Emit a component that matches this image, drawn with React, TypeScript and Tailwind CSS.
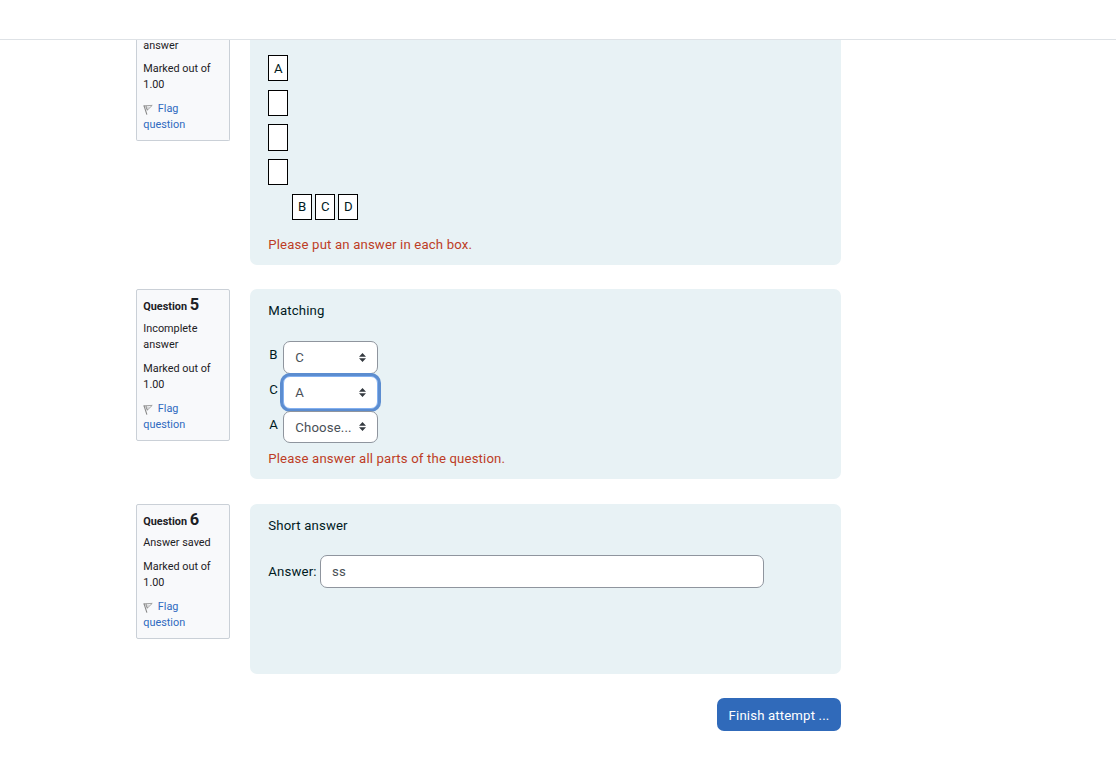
import { useState } from "react";

interface QuestionInfoProps {
  number?: number;
  state: string;
  className?: string;
}

const panelClassName = "w-[591px] bg-[#e8f2f5] px-[18.3px] text-[#001a1e]";
const feedbackClassName = "text-[#bd3d26]";
const tileClassName =
  "flex h-[26.4px] w-5 items-center justify-center border border-black bg-white pt-px";

function FlagIcon() {
  return (
    <svg width="10" height="11" viewBox="0 0 10 11" fill="none" className="mt-[3px] mr-[4.5px] shrink-0">
      <path d="M0.5 1.8 9.2 1.4 4.4 6" stroke="#999" strokeWidth="0.9" />
      <path d="M1 1.6 3.9 10.7M2.9 2 4.4 6.2" stroke="#888" strokeWidth="1.1" />
      <path d="M2.4 3.2h4" stroke="#bbb" strokeWidth="0.7" />
    </svg>
  );
}

function QuestionInfo({ number, state, className = "" }: QuestionInfoProps) {
  return (
    <div
      className={`w-[94px] shrink-0 rounded-[2px] border border-[#cad0d7] bg-[#f8f9fb] pl-[6.3px] text-[10.85px] leading-4 tracking-normal text-[#1d2125] ${className}`}
    >
      {number && (
        <h3 className="box-content h-6 pt-[7px] font-bold">
          Question <span className="text-[16.4px]">{number}</span>
        </h3>
      )}
      <p className="mb-2 w-[76px]">{state}</p>
      <p className="mb-2">
        Marked out of
        <br />
        1.00
      </p>
      <a href="#" className="block text-[#2f6ac0]">
        <span className="flex">
          <FlagIcon />
          Flag
        </span>
        question
      </a>
    </div>
  );
}

interface MatchSelectProps {
  label: string;
  initial: string;
  focused?: boolean;
}

function MatchSelect({ label, initial, focused }: MatchSelectProps) {
  const [value, setValue] = useState(initial);

  return (
    <div className="flex h-[34.6px]">
      <label className="w-[14.7px] pt-1 pl-px leading-5">{label}</label>
      <div className="relative h-[32.6px] w-[95px]">
        <select
          value={value}
          onChange={(e) => setValue(e.target.value)}
          className={`block h-full w-full appearance-none rounded-[7px] border bg-white pt-[1.4px] pl-[11.3px] tracking-[0.15px] text-[#495057] outline-none ${
            focused ? "border-[#83b0f0] ring-[3px] ring-[#5c8dd0]" : "border-[#8f959e]"
          }`}
        >
          <option value="">Choose...</option>
          <option>A</option>
          <option>B</option>
          <option>C</option>
        </select>
        <svg
          width="7"
          height="9"
          viewBox="0 0 7 9"
          fill="#343a40"
          className="pointer-events-none absolute top-[11.6px] right-3"
        >
          <path d="M3.5 0 7 3.7H0zM3.5 9 0 5.3h7z" />
        </svg>
      </div>
    </div>
  );
}

export default function App() {
  const [answer, setAnswer] = useState("ss");

  return (
    <div className="h-[757px] overflow-hidden bg-white font-[Roboto,sans-serif] text-[13.2px] leading-5 tracking-[0.15px]">
      <header className="relative z-10 h-10 border-b border-[#dee2e6] bg-white" />

      <main className="ml-[136px] w-[705px]">
        <section className="flex h-[225px] items-start gap-5">
          <QuestionInfo
            state="answer"
            className="-mt-[2px] h-[103px] rounded-t-none border-t-0 *:first:mb-[7px]"
          />
          <div className={`h-full rounded-b-[7px] pt-[15px] ${panelClassName}`}>
            <div className="flex flex-col gap-[8.3px]">
              <div className={tileClassName}>A</div>
              <div className={tileClassName} />
              <div className={tileClassName} />
              <div className={tileClassName} />
              <div className="ml-6 flex gap-[3px]">
                <div className={tileClassName}>B</div>
                <div className={tileClassName}>C</div>
                <div className={tileClassName}>D</div>
              </div>
            </div>
            <p className={`mt-[14.5px] ${feedbackClassName}`}>Please put an answer in each box.</p>
          </div>
        </section>

        <section className="mt-6 flex items-start gap-5">
          <QuestionInfo number={5} state="Incomplete answer" className="h-[152px]" />
          <div className={`h-[190px] rounded-[7px] pt-3 ${panelClassName}`}>
            <p className="mb-[20.4px]">Matching</p>
            <MatchSelect label="B" initial="C" />
            <MatchSelect label="C" initial="A" focused />
            <MatchSelect label="A" initial="" />
            <p className={`mt-[3.4px] ${feedbackClassName}`}>
              Please answer all parts of the question.
            </p>
          </div>
        </section>

        <section className="mt-[25px] flex items-start gap-5">
          <QuestionInfo number={6} state="Answer saved" className="h-[135px] *:first:h-[23px]" />
          <div className={`h-[170px] rounded-[7px] pt-3 ${panelClassName}`}>
            <p className="mb-[19px]">Short answer</p>
            <div className="flex items-center gap-[3.7px]">
              <label htmlFor="answer" className="w-12 whitespace-nowrap">
                Answer:
              </label>
              <input
                id="answer"
                type="text"
                value={answer}
                onChange={(e) => setAnswer(e.target.value)}
                className="h-[33px] w-[444px] rounded-[7px] border border-[#8f959e] bg-white px-[11px] tracking-[0.15px] text-[#495057] outline-none"
              />
            </div>
          </div>
        </section>

        <div className="mt-6 flex justify-end">
          <button
            type="button"
            className="h-[33px] w-[124px] rounded-[7px] bg-[#306aba] pt-[2px] tracking-[0.15px] text-white"
          >
            Finish attempt ...
          </button>
        </div>
      </main>
    </div>
  );
}
